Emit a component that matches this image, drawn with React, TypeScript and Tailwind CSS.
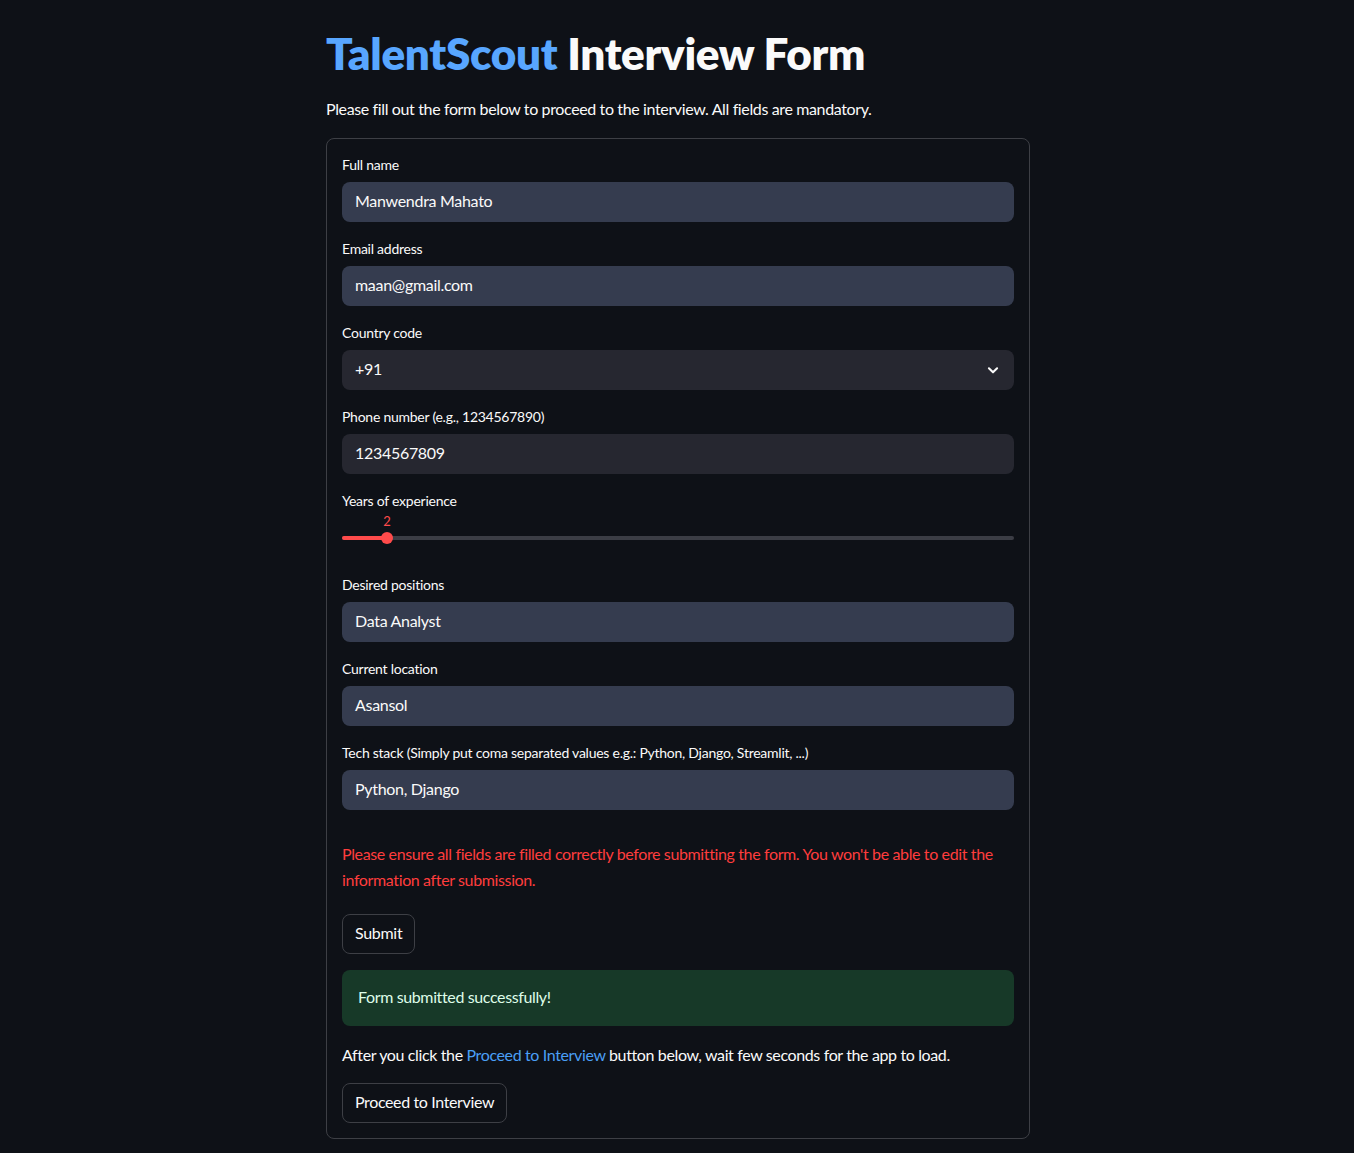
import React from 'react';

const font = { fontFamily: 'Lato, "Open Sans", sans-serif' };

const Label: React.FC<{ children: React.ReactNode }> = ({ children }) => (
  <div className="h-6 mb-1 pb-1 flex items-center text-[14px] tracking-[-0.25px] text-[#fafafa]">{children}</div>
);

const TextField: React.FC<{ label: string; value: string; filled?: boolean }> = ({ label, value, filled = true }) => (
  <div>
    <Label>{label}</Label>
    <div
      className={`h-10 rounded-lg flex items-center px-[13px] pb-[3px] text-[16px] tracking-[-0.3px] text-[#fafafa] ${
        filled ? 'bg-[#353c4f]' : 'bg-[#262730]'
      }`}
    >
      {value}
    </div>
  </div>
);

export default function App() {
  return (
    <div className="min-h-screen bg-[#0e1117] text-[#fafafa]" style={font}>
      <div className="w-[704px] ml-[326px] pt-[25px] pb-[15px]">
        <h1 className="text-[44px] font-extrabold leading-[56px] tracking-[-0.3px]">
          <span className="text-[#58a6ff]">TalentScout</span> Interview Form
        </h1>
        <p className="mt-[15px] text-[16px] leading-[26px] tracking-[-0.37px]">
          Please fill out the form below to proceed to the interview. All fields are mandatory.
        </p>

        <div className="mt-[16px] border border-[#3d3f45] rounded-lg px-[15px] py-[15px] flex flex-col gap-4">
          <TextField label="Full name" value="Manwendra Mahato" />
          <TextField label="Email address" value="maan@gmail.com" />

          <div>
            <Label>Country code</Label>
            <div className="h-10 rounded-lg bg-[#262730] flex items-center justify-between pl-[13px] pr-[14px] text-[16px] tracking-[-0.3px]">
              <span className="pb-[3px]">+91</span>
              <svg width="14" height="14" viewBox="0 0 24 24" fill="none" stroke="#fafafa" strokeWidth="3.5" strokeLinecap="round" strokeLinejoin="round">
                <path d="M5 9l7 7 7-7" />
              </svg>
            </div>
          </div>

          <TextField label="Phone number (e.g., 1234567890)" value="1234567809" filled={false} />

          <div>
            <Label>Years of experience</Label>
            <div className="relative h-10">
              <div className="absolute left-[45px] top-[-6px] -translate-x-1/2 text-[13px] text-[#ff4b4b]">2</div>
              <div className="absolute left-0 right-0 top-[18px] h-1 rounded-full bg-[#3b3d45]" />
              <div className="absolute left-0 w-[45px] top-[18px] h-1 rounded-l-full bg-[#ff4b4b]" />
              <div className="absolute left-[39px] top-[14px] w-3 h-3 rounded-full bg-[#ff4b4b]" />
            </div>
          </div>

          <TextField label="Desired positions" value="Data Analyst" />
          <TextField label="Current location" value="Asansol" />
          <TextField label="Tech stack (Simply put coma separated values e.g.: Python, Django, Streamlit, ...)" value="Python, Django" />

          <p className="pt-[15px] pb-[5px] text-[16px] leading-[26px] tracking-[-0.37px] text-[#ff3d3d]">
            Please ensure all fields are filled correctly before submitting the form. You won't be able to edit the information after submission.
          </p>

          <div>
            <button className="h-10 px-3 pb-[2px] rounded-lg border border-[#3d3f45] bg-[#0e1117] text-[16px] tracking-[-0.3px] text-[#fafafa]">
              Submit
            </button>
          </div>

          <div className="h-14 rounded-lg bg-[#173928] flex items-center px-4 pb-[2px] text-[16px] tracking-[-0.37px] text-[#dffde9]">
            Form submitted successfully!
          </div>

          <p className="text-[16px] leading-[25px] tracking-[-0.37px]">
            After you click the <span className="text-[#4a9ff5]">Proceed to Interview</span> button below, wait few seconds for the app to load.
          </p>

          <div>
            <button className="h-10 px-3 pb-[2px] rounded-lg border border-[#3d3f45] bg-[#0e1117] text-[16px] tracking-[-0.37px] text-[#fafafa]">
              Proceed to Interview
            </button>
          </div>
        </div>
      </div>
    </div>
  );
}
